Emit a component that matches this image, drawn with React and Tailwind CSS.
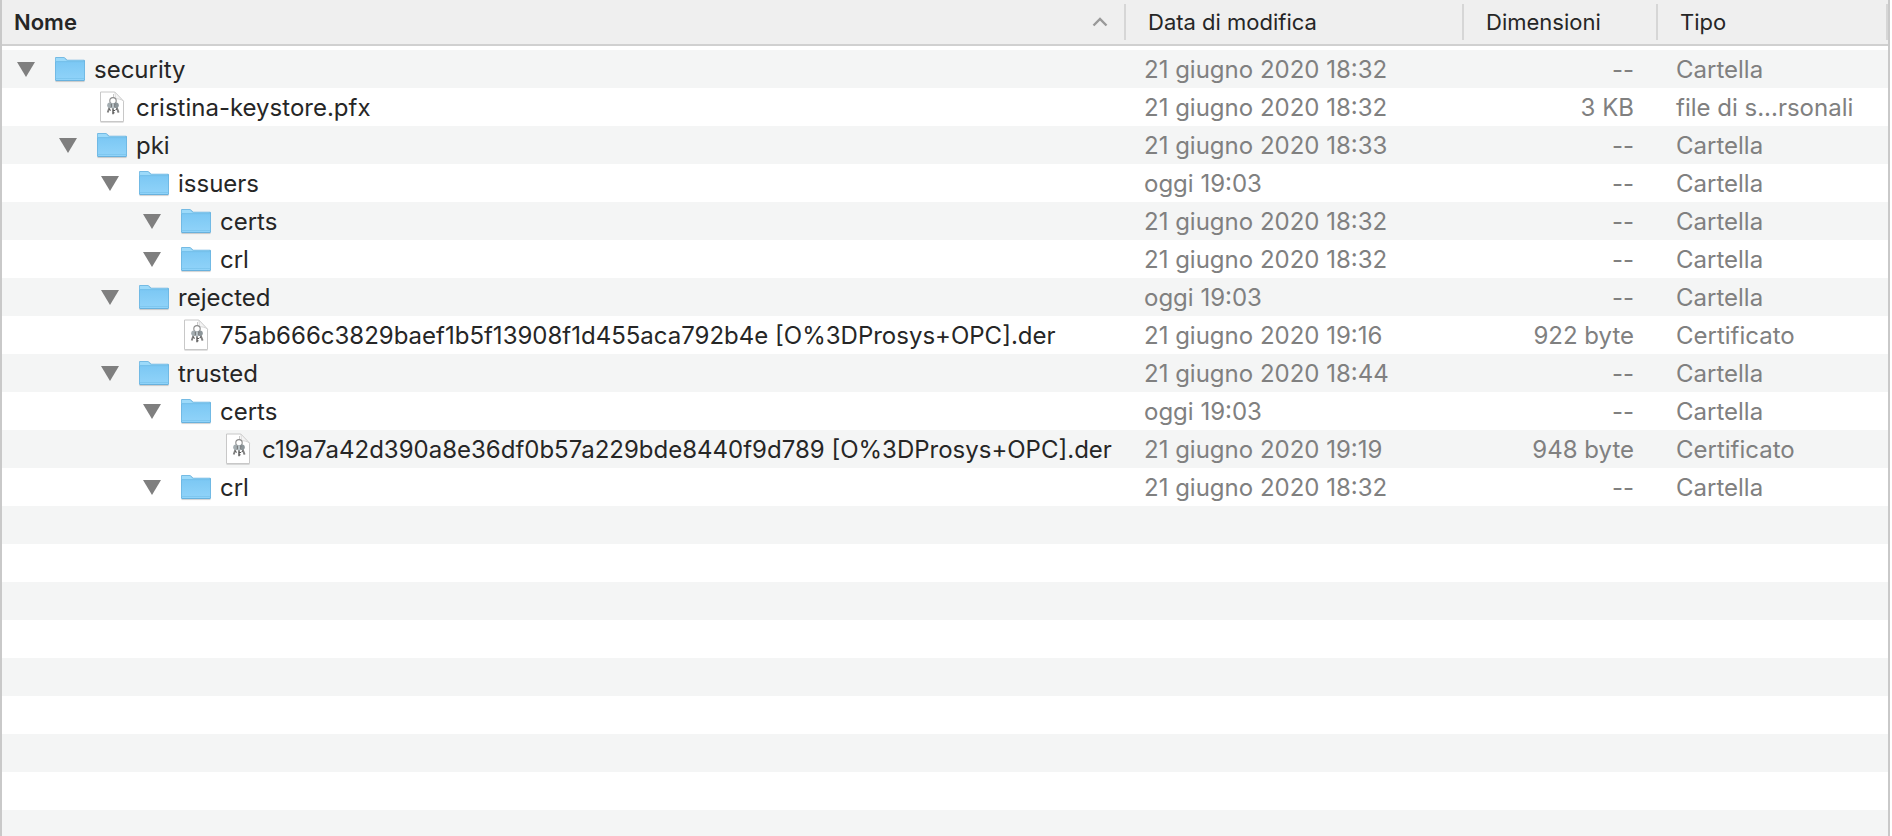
import { useState } from "react";

const TREE = [
  { id: "security", level: 0, folder: true, name: "security", date: "21 giugno 2020 18:32", size: "--", type: "Cartella" },
  { id: "keystore", parent: "security", level: 1, name: "cristina-keystore.pfx", date: "21 giugno 2020 18:32", size: "3 KB", type: "file di s...rsonali" },
  { id: "pki", parent: "security", level: 1, folder: true, name: "pki", date: "21 giugno 2020 18:33", size: "--", type: "Cartella" },
  { id: "issuers", parent: "pki", level: 2, folder: true, name: "issuers", date: "oggi 19:03", size: "--", type: "Cartella" },
  { id: "issuers-certs", parent: "issuers", level: 3, folder: true, name: "certs", date: "21 giugno 2020 18:32", size: "--", type: "Cartella" },
  { id: "issuers-crl", parent: "issuers", level: 3, folder: true, name: "crl", date: "21 giugno 2020 18:32", size: "--", type: "Cartella" },
  { id: "rejected", parent: "pki", level: 2, folder: true, name: "rejected", date: "oggi 19:03", size: "--", type: "Cartella" },
  { id: "rejected-der", parent: "rejected", level: 3, name: "75ab666c3829baef1b5f13908f1d455aca792b4e [O%3DProsys+OPC].der", date: "21 giugno 2020 19:16", size: "922 byte", type: "Certificato" },
  { id: "trusted", parent: "pki", level: 2, folder: true, name: "trusted", date: "21 giugno 2020 18:44", size: "--", type: "Cartella" },
  { id: "trusted-certs", parent: "trusted", level: 3, folder: true, name: "certs", date: "oggi 19:03", size: "--", type: "Cartella" },
  { id: "trusted-der", parent: "trusted-certs", level: 4, name: "c19a7a42d390a8e36df0b57a229bde8440f9d789 [O%3DProsys+OPC].der", date: "21 giugno 2020 19:19", size: "948 byte", type: "Certificato" },
  { id: "trusted-crl", parent: "trusted", level: 3, folder: true, name: "crl", date: "21 giugno 2020 18:32", size: "--", type: "Cartella" },
];

const INDENT = ["pl-[14px]", "pl-[56px]", "pl-[98px]", "pl-[140px]", "pl-[182px]"];

function FolderIcon() {
  return (
    <svg className="h-8 w-8 shrink-0" viewBox="0 0 32 32" aria-hidden="true">
      <defs>
        <linearGradient id="folder-front" x1="0" y1="0" x2="0" y2="1">
          <stop offset="0" stopColor="#7cc8f4" />
          <stop offset="1" stopColor="#90d3f9" />
        </linearGradient>
      </defs>
      <path d="M1.500 28.500h29" stroke="#000" strokeOpacity=".16" strokeWidth="1.200" />
      <path d="M1 5.200Q1 4 2.200 4h7.200q.8 0 1.400.6l1.800 1.700q.5.500 1.300.5h15.900Q31 6.800 31 8v18.800q0 1.200-1.200 1.200H2.200Q1 28 1 26.800z" fill="#68b1dd" />
      <path d="M1.600 5.500Q1.600 4.700 2.400 4.700h6.900q.6 0 1 .4l1.900 1.800q.6.500 1.400.5h15.600q.8 0 .8.800V9H1.600z" fill="#9cdafa" />
      <path d="M1.700 9h28.600v17.200q0 .8-.8.800h-27q-.8 0-.8-.8z" fill="url(#folder-front)" />
      <path d="M1.500 8.600h29" stroke="#6ebbe8" strokeWidth=".9" />
      <path d="M1.500 25.500h29" stroke="#73bfe9" strokeWidth=".6" />
    </svg>
  );
}

function CertificateIcon() {
  return (
    <svg className="h-8 w-8 shrink-0" viewBox="0 0 32 32" aria-hidden="true">
      <path d="M4.500 31.300h23" stroke="#000" strokeOpacity=".15" strokeWidth="1" />
      <path d="M4.500 1h14.300l8.700 9.200v20.300h-23z" fill="#fff" stroke="#c8c8c8" strokeWidth="1" />
      <path d="M18.800 1c.5 3 .6 4.500.3 6.500 2.500.3 6.300.6 8.400 2.700z" fill="#f4f4f4" stroke="#d0d0d0" strokeWidth=".8" />
      <path d="M17.500 3v3.500" stroke="#bbb" strokeWidth=".8" />
      <circle cx="17" cy="9.800" r="3.200" fill="none" stroke="#8c8c8c" strokeWidth="1.100" />
      <path d="M14.500 13.500 11.700 21.500M17 14v9.300M19.600 13.500l3 8.200" stroke="#808080" strokeWidth="1.900" />
      <path d="M13 18.500l2 .8M17 19.500h2M17 21.800h1.600M21 18l-1.500.8" stroke="#555" strokeWidth="1" />
      <circle cx="14" cy="14.300" r="2.800" fill="#a4adb1" />
      <circle cx="20" cy="14.300" r="2.800" fill="#8c9599" />
      <circle cx="17" cy="15" r="2.500" fill="#b8c1c5" />
      <path d="M15.300 12.800v3.600M18.800 12.800v3.600" stroke="#555" strokeWidth=".8" />
    </svg>
  );
}

function HeaderCell({ children, className = "" }) {
  return (
    <th scope="col" className="p-0 pb-1 text-left font-normal">
      <div className="flex h-[46px] items-start border-b-2 border-[#d0d0d0] bg-[#efefef] pt-1">
        <div className={"flex h-9 min-w-0 flex-1 items-center justify-between border-r-2 border-[#d6d6d6] " + className}>
          {children}
        </div>
      </div>
    </th>
  );
}

export default function App() {
  const [closed, setClosed] = useState([]);
  const [ascending, setAscending] = useState(true);

  const toggle = (id) =>
    setClosed((ids) => (ids.includes(id) ? ids.filter((x) => x !== id) : [...ids, id]));

  const isVisible = (item) => {
    let parent = item.parent;
    while (parent) {
      if (closed.includes(parent)) return false;
      parent = TREE.find((x) => x.id === parent).parent;
    }
    return true;
  };

  return (
    <main className="mr-0.5 h-screen overflow-hidden border-x-2 border-[#c9c9c9] bg-white bg-[repeating-linear-gradient(to_bottom,#f4f5f5_0px,#f4f5f5_38px,#ffffff_38px,#ffffff_76px)] bg-[position:0_50px] bg-no-repeat font-['Inter','Liberation_Sans',sans-serif]">
      <table className="w-full table-fixed border-collapse bg-transparent">
        <colgroup>
          <col />
          <col className="w-[338px]" />
          <col className="w-[194px]" />
          <col className="w-[230px]" />
        </colgroup>
        <thead className="bg-white text-[22px] leading-9 text-[#262626]">
          <tr>
            <HeaderCell className="pr-4 pl-3 font-semibold">
              Nome
              <button type="button" aria-label="Inverti ordine" onClick={() => setAscending(!ascending)}>
                <svg className={ascending ? "h-4 w-4" : "h-4 w-4 rotate-180"} viewBox="0 0 16 16" fill="none" stroke="#999" strokeWidth="2.400" aria-hidden="true">
                  <path d="M1.500 11.500 8 5l6.500 6.500" />
                </svg>
              </button>
            </HeaderCell>
            <HeaderCell className="pl-[22px]">Data di modifica</HeaderCell>
            <HeaderCell className="pl-[22px]">Dimensioni</HeaderCell>
            <HeaderCell className="pl-[22px]">Tipo</HeaderCell>
          </tr>
        </thead>
        <tbody className="text-2xl leading-9 whitespace-nowrap text-[#808080]">
          {TREE.filter(isVisible).map((item) => (
            <tr key={item.id} className="h-[38px]">
              <td className="p-0">
                <div className={"flex h-[38px] items-center " + INDENT[item.level]}>
                  <span className="flex w-[38px] shrink-0 items-center">
                    {item.folder && (
                      <button type="button" aria-label={item.name} aria-expanded={!closed.includes(item.id)} onClick={() => toggle(item.id)}>
                        <svg className={closed.includes(item.id) ? "h-5 w-5 -rotate-90" : "h-5 w-5"} viewBox="0 0 20 20" aria-hidden="true">
                          <path d="M1 3h18l-9 15z" fill="#7f7f7f" />
                        </svg>
                      </button>
                    )}
                  </span>
                  {item.folder ? <FolderIcon /> : <CertificateIcon />}
                  <span className="pt-0.5 pl-2 text-[#262626]">{item.name}</span>
                </div>
              </td>
              <td className="p-0 pt-0.5 pl-[18px]">{item.date}</td>
              <td className="p-0 pt-0.5 pr-6 text-right">{item.size}</td>
              <td className="p-0 pt-0.5 pl-[18px]">{item.type}</td>
            </tr>
          ))}
        </tbody>
      </table>
    </main>
  );
}
